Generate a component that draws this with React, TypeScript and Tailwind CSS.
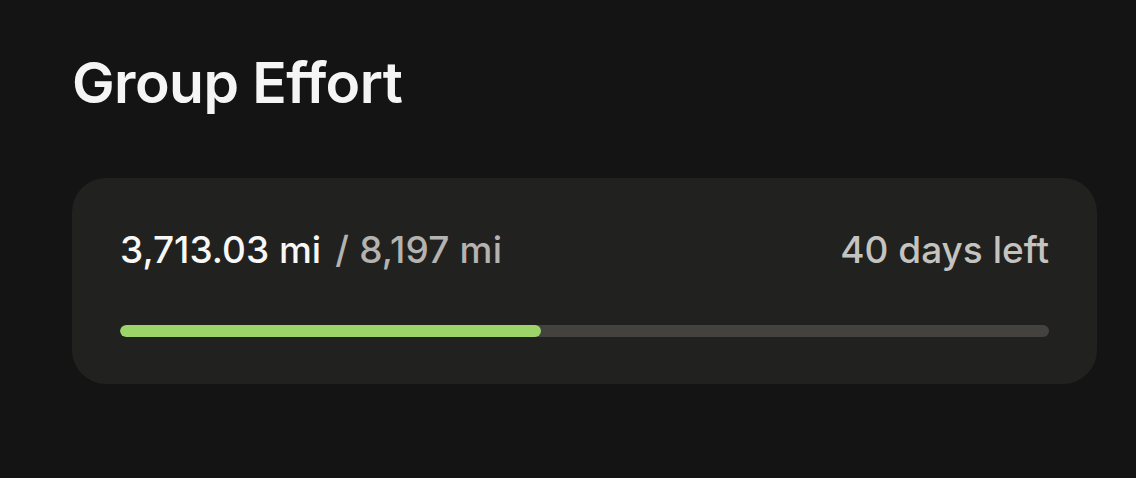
export default function App() {
  const current = 3713.03;
  const goal = 8197;
  const pct = (current / goal) * 100;

  return (
    <div className="min-h-screen w-full bg-[#141414] px-[72px] pt-[49px] font-['Inter','Noto_Sans',sans-serif] text-[#f5f5f5]">
      {/* Heading */}
      <h1 className="text-[57px] font-semibold leading-[1.21] tracking-[-0.01em]">Group Effort</h1>

      {/* Progress card */}
      <div className="mt-[60px] w-[1025px] rounded-[34px] bg-[#212120] px-[48px] pt-[50px] pb-[47px]">
        <div className="flex items-center justify-between text-[37px] font-medium leading-[1.21]">
          <div>
            <span className="text-[#f7f7f5]">3,713.03 mi</span>
            <span className="ml-[4px] text-[#b4b3af] tracking-[0.005em]"> / 8,197 mi</span>
          </div>
          <span className="text-[#c4c3bf]">40 days left</span>
        </div>
        <div className="mt-[52px] h-[12px] w-full overflow-hidden rounded-full bg-[#43423f]">
          <div className="h-full rounded-full bg-[#9cd46a]" style={{ width: `${pct}%` }} />
        </div>
      </div>
    </div>
  );
}
